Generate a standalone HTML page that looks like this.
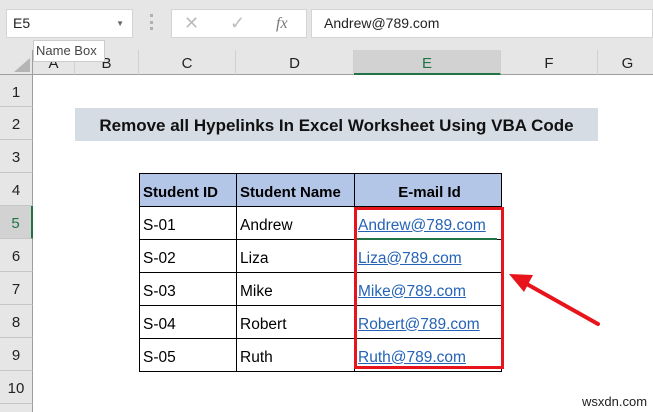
<!DOCTYPE html><html><head><style>
html,body{margin:0;width:653px;height:412px;overflow:hidden}
body{background:#fff;font-family:"Liberation Sans",sans-serif;position:relative}
div{position:absolute;box-sizing:border-box}
.ch{top:50px;height:25px;border-right:1px solid #d0d0d0;border-bottom:1px solid #9e9e9e;background:#e6e6e6;text-align:center;font-size:15px;color:#222;line-height:27px}
.rh{left:0;width:33px;height:33px;border-bottom:1px solid #c6c6c6;border-right:1px solid #9e9e9e;background:#e6e6e6;text-align:center;font-size:15px;color:#222;line-height:36px}
table{position:absolute;left:139px;top:173px;border-collapse:collapse;table-layout:fixed}
tr{height:33px}
td,th{border:1px solid #000;padding:5px 0 0 3px;font-size:15.5px;color:#000;white-space:nowrap;box-sizing:border-box;overflow:hidden}
th{background:#b4c6e7;text-align:left;font-size:15px}
.l{color:#2463b6;text-decoration:underline}
</style></head><body>
<div style="left:0;top:0;width:653px;height:50px;background:#e6e6e6"></div>
<div style="left:6px;top:9px;width:127px;height:29px;background:#fff;border:1px solid #d4d4d4;font-size:14px;line-height:27px;padding-left:6px;color:#222">E5<span style="position:absolute;right:8px;top:0;font-size:8px;color:#666">▼</span></div>
<div style="left:150px;top:14px;width:3px;height:16px;border-left:3px dotted #b0b0b0"></div>
<div style="left:171px;top:9px;width:136px;height:29px;background:#fff;border:1px solid #d4d4d4;color:#bdbdbd;font-size:18px;line-height:27px"><span style="position:absolute;left:12px">✕</span><span style="position:absolute;left:58px">✓</span><span style="position:absolute;left:104px;font-family:'Liberation Serif',serif;font-style:italic;color:#777;font-size:16px">fx</span></div>
<div style="left:311px;top:9px;width:342px;height:29px;background:#fff;border:1px solid #d4d4d4;font-size:14px;line-height:27px;padding-left:12px;color:#222">Andrew@789.com</div>
<div style="left:0;top:50px;width:33px;height:25px;background:#e6e6e6;border-right:1px solid #9e9e9e;border-bottom:1px solid #9e9e9e"></div>
<div style="left:14px;top:58px;width:0;height:0;border-left:16px solid transparent;border-bottom:14px solid #b5b5b5"></div>
<div class="ch" style="left:33px;width:42px">A</div>
<div class="ch" style="left:75px;width:64px">B</div>
<div class="ch" style="left:139px;width:97px">C</div>
<div class="ch" style="left:236px;width:118px">D</div>
<div class="ch" style="left:354px;width:147px;background:#d2d2d2;border-bottom:2px solid #217346;color:#217346">E</div>
<div class="ch" style="left:501px;width:97px">F</div>
<div class="ch" style="left:598px;width:60px">G</div>
<div style="left:33px;top:40px;width:72px;height:22px;background:#fff;border:1px solid #ccc;font-size:13px;line-height:20px;padding-left:2px;color:#444;white-space:nowrap">Name Box</div>
<div class="rh" style="top:75px;height:32px">1</div>
<div class="rh" style="top:107px">2</div>
<div class="rh" style="top:140px">3</div>
<div class="rh" style="top:173px">4</div>
<div class="rh" style="top:206px;background:#d2d2d2;border-right:2px solid #217346;color:#217346">5</div>
<div class="rh" style="top:239px">6</div>
<div class="rh" style="top:272px">7</div>
<div class="rh" style="top:305px">8</div>
<div class="rh" style="top:338px">9</div>
<div class="rh" style="top:371px">10</div>
<div class="rh" style="top:404px;height:8px;border-bottom:none"></div>
<div style="left:75px;top:108px;width:523px;height:33px;background:#d6dce4;font-weight:bold;font-size:17px;text-align:center;line-height:35px;color:#111;white-space:nowrap">Remove all Hypelinks In Excel Worksheet Using VBA Code</div>
<table>
<colgroup><col style="width:97px"><col style="width:118px"><col style="width:147px"></colgroup>
<tr><th>Student ID</th><th>Student Name</th><th style="text-align:center">E-mail Id</th></tr>
<tr><td>S-01</td><td>Andrew</td><td><span class="l">Andrew@789.com</span></td></tr>
<tr><td>S-02</td><td>Liza</td><td><span class="l">Liza@789.com</span></td></tr>
<tr><td>S-03</td><td>Mike</td><td><span class="l">Mike@789.com</span></td></tr>
<tr><td>S-04</td><td>Robert</td><td><span class="l">Robert@789.com</span></td></tr>
<tr><td>S-05</td><td>Ruth</td><td><span class="l">Ruth@789.com</span></td></tr>
</table>
<div style="left:355px;top:238px;width:142px;height:2px;background:#217346"></div>
<div style="left:354px;top:207px;width:150px;height:162px;border:3px solid #e8141b"></div>
<svg style="position:absolute;left:0;top:0" width="653" height="412"><line x1="598" y1="324" x2="525" y2="283" stroke="#e8141b" stroke-width="4" stroke-linecap="round"/><polygon points="509,274 533,275 524,292" fill="#e8141b"/></svg>
<div style="left:578px;top:392px;width:75px;height:20px;background:#fff;font-size:13px;line-height:20px;padding-left:4px;color:#222">wsxdn.com</div>
</body></html>
